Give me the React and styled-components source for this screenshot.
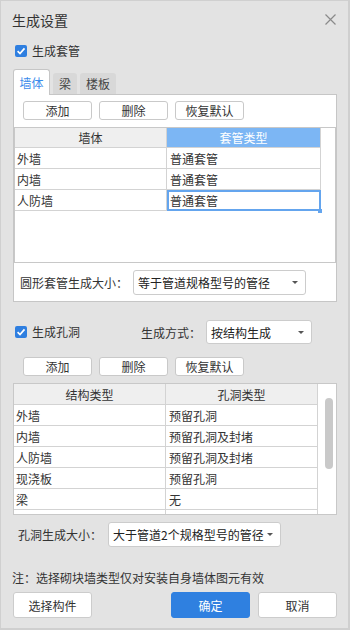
import React from "react";
import styled, { createGlobalStyle } from "styled-components";

const Global = createGlobalStyle`
  html, body { margin: 0; padding: 0; background: #ffffff; }
  * { box-sizing: border-box; }
`;

const Window = styled.div`
  width: 350px;
  height: 630px;
  background: #e3e3e3;
  border: 1px solid #d0d0d0;
  border-right: 2px solid #cfcfcf;
  border-bottom: 2px solid #cfcfcf;
  display: flex;
  flex-direction: column;
  font-family: "Noto Sans CJK SC", "Noto Sans", sans-serif;
  font-size: 12px;
  color: #333;
  overflow: hidden;
`;

const TitleBar = styled.div`
  height: 37px;
  flex: none;
  display: flex;
  align-items: center;
  justify-content: space-between;
  padding: 0 12px 0 11px;
`;

const Title = styled.div`
  font-size: 14px;
  line-height: 16px;
  color: #333;
`;

const Close = styled.button`
  border: none;
  background: transparent;
  padding: 0;
  width: 11px;
  height: 11px;
  display: flex;
`;

const CheckRow = styled.div`
  display: flex;
  align-items: center;
  height: ${(p) => p.$h || 14}px;
  margin-top: ${(p) => p.$mt || 0}px;
  padding-left: 14px;
  flex: none;
`;

const Box = styled.span`
  width: 12px;
  height: 12px;
  border-radius: 2px;
  background: #2f7fe0;
  display: inline-flex;
  align-items: center;
  justify-content: center;
  flex: none;
`;

const CheckLabel = styled.span`
  margin-left: 5px;
  line-height: 14px;
  font-size: 12px;
`;

const TabBar = styled.div`
  display: flex;
  align-items: flex-end;
  gap: 3px;
  margin-top: 11px;
  padding-left: 12px;
  margin-bottom: -1px;
  position: relative;
  z-index: 1;
  flex: none;
`;

const Tab = styled.div`
  width: ${(p) => p.$w}px;
  height: ${(p) => (p.$active ? 26 : 21)}px;
  margin-bottom: ${(p) => (p.$active ? 0 : 1)}px;
  background: ${(p) => (p.$active ? "#ffffff" : "#d8d8d8")};
  border: ${(p) => (p.$active ? "1px solid #c6c6c6" : "none")};
  border-bottom: none;
  border-radius: 3px 3px 0 0;
  color: ${(p) => (p.$active ? "#3b8beb" : "#444")};
  display: flex;
  align-items: center;
  justify-content: center;
  font-size: 12px;
  padding-bottom: ${(p) => (p.$active ? 1 : 0)}px;
`;

const Panel = styled.div`
  margin-left: 12px;
  width: 324px;
  height: 208px;
  border: 1px solid #c6c6c6;
  background: #ffffff;
  display: flex;
  flex-direction: column;
  flex: none;
`;

const ButtonRow = styled.div`
  display: flex;
  gap: 7px;
  padding-left: ${(p) => p.$pl}px;
  margin-top: ${(p) => p.$mt}px;
  flex: none;
`;

const SmallButton = styled.button`
  width: 69px;
  height: 19px;
  border: 1px solid #c9c9c9;
  border-radius: 3px;
  background: #ffffff;
  font-family: inherit;
  font-size: 12px;
  color: #333;
  padding: 0;
  line-height: 16px;
`;

const Frame = styled.div`
  margin-top: ${(p) => p.$mt}px;
  margin-left: ${(p) => p.$ml || 0}px;
  width: ${(p) => p.$w}px;
  height: ${(p) => p.$h}px;
  border: 1px solid #c8c8c8;
  background: #ffffff;
  display: flex;
  overflow: hidden;
  flex: none;
`;

const Grid = styled.div`
  display: flex;
  flex-direction: column;
  flex: none;
`;

const Row = styled.div`
  display: grid;
  grid-template-columns: ${(p) => p.$cols};
`;

const Cell = styled.div`
  position: relative;
  height: ${(p) => p.$h}px;
  border-right: 1px solid #d3d3d3;
  border-bottom: 1px solid #d3d3d3;
  background: ${(p) => (p.$blue ? "#7cb6f4" : p.$head ? "#efefef" : "#ffffff")};
  color: ${(p) => (p.$blue ? "#ffffff" : "#333")};
  display: flex;
  align-items: center;
  justify-content: ${(p) => (p.$head ? "center" : "flex-start")};
  padding-left: ${(p) => (p.$head ? 0 : p.$pl || 2)}px;
  font-size: 12px;
  white-space: nowrap;
  ${(p) =>
    p.$selected &&
    `
    outline: 2px solid #64a5ee;
    outline-offset: -2px;
    &::after {
      content: "";
      position: absolute;
      right: -2px;
      bottom: -3px;
      width: 4px;
      height: 4px;
      background: #64a5ee;
    }
  `}
`;

const Track = styled.div`
  flex: 1;
  padding: 14px 0 0 7px;
  background: #ffffff;
`;

const Thumb = styled.div`
  width: 8px;
  height: 71px;
  border-radius: 4px;
  background: #c9c9c9;
`;

const FieldRow = styled.div`
  display: flex;
  align-items: center;
  height: ${(p) => p.$h}px;
  margin-top: ${(p) => p.$mt || 0}px;
  padding-left: ${(p) => p.$pl}px;
  flex: none;
`;

const FieldLabel = styled.span`
  width: ${(p) => p.$w}px;
  flex: none;
  font-size: 12px;
  color: #333;
  white-space: nowrap;
`;

const Select = styled.div`
  width: ${(p) => p.$w}px;
  height: ${(p) => p.$h || 25}px;
  border: 1px solid #cccccc;
  border-radius: 3px;
  background: #ffffff;
  display: flex;
  align-items: center;
  justify-content: space-between;
  padding: 0 7px 0 4px;
  font-size: 12px;
  color: #222;
  flex: none;
  white-space: nowrap;
`;

const Arrow = styled.span`
  width: 0;
  height: 0;
  border-left: 3px solid transparent;
  border-right: 3px solid transparent;
  border-top: 3px solid #555;
  flex: none;
`;

const Spacer = styled.span`
  width: ${(p) => p.$w}px;
  flex: none;
`;

const Note = styled.div`
  margin-top: 23px;
  padding-left: 11px;
  height: 16px;
  line-height: 16px;
  font-size: 12px;
  color: #333;
  flex: none;
`;

const Footer = styled.div`
  display: flex;
  justify-content: space-between;
  margin-top: 6px;
  padding: 0 11px 0 12px;
  flex: none;
`;

const Group = styled.div`
  display: flex;
  gap: 8px;
`;

const Button = styled.button`
  width: 79px;
  height: 26px;
  border-radius: 3px;
  border: 1px solid ${(p) => (p.$primary ? "#2f80e0" : "#cccccc")};
  background: ${(p) => (p.$primary ? "#2f80e0" : "#ffffff")};
  color: ${(p) => (p.$primary ? "#ffffff" : "#333")};
  font-family: inherit;
  font-size: 12px;
  padding: 0;
`;

const Check = () => (
  <Box>
    <svg width="10" height="10" viewBox="0 0 10 10">
      <path d="M1.6 5.2 L4 7.5 L8.5 2.4" fill="none" stroke="#fff" strokeWidth="1.7" />
    </svg>
  </Box>
);

const sleeveRows = [
  ["外墙", "普通套管"],
  ["内墙", "普通套管"],
  ["人防墙", "普通套管"],
];

const holeRows = [
  ["外墙", "预留孔洞"],
  ["内墙", "预留孔洞及封堵"],
  ["人防墙", "预留孔洞及封堵"],
  ["现浇板", "预留孔洞"],
  ["梁", "无"],
  ["", ""],
];

export default function App() {
  return (
    <>
      <Global />
      <Window>
        <TitleBar>
          <Title>生成设置</Title>
          <Close aria-label="关闭">
            <svg width="11" height="11" viewBox="0 0 11 11">
              <path d="M0.5 0.5 L10.5 10.5 M10.5 0.5 L0.5 10.5" stroke="#8a8a8a" strokeWidth="1.2" />
            </svg>
          </Close>
        </TitleBar>

        <CheckRow $mt={6}>
          <Check />
          <CheckLabel>生成套管</CheckLabel>
        </CheckRow>

        <TabBar>
          <Tab $active $w={37}>墙体</Tab>
          <Tab $w={24}>梁</Tab>
          <Tab $w={36}>楼板</Tab>
        </TabBar>

        <Panel>
          <ButtonRow $pl={9} $mt={6}>
            <SmallButton>添加</SmallButton>
            <SmallButton>删除</SmallButton>
            <SmallButton>恢复默认</SmallButton>
          </ButtonRow>
          <Frame $mt={7} $w={322} $h={136}>
            <Grid>
              <Row $cols="152px 154px">
                <Cell $head $h={20}>墙体</Cell>
                <Cell $head $blue $h={20}>套管类型</Cell>
              </Row>
              {sleeveRows.map(([a, b], i) => (
                <Row key={a} $cols="152px 154px">
                  <Cell $h={21}>{a}</Cell>
                  <Cell $h={21} $pl={3} $selected={i === 2}>{b}</Cell>
                </Row>
              ))}
            </Grid>
          </Frame>
          <FieldRow $h={38} $pl={6}>
            <FieldLabel $w={113}>圆形套管生成大小：</FieldLabel>
            <Select $w={173}>
              <span>等于管道规格型号的管径</span>
              <Arrow />
            </Select>
          </FieldRow>
        </Panel>

        <CheckRow $mt={18} $h={24}>
          <Check />
          <CheckLabel>生成孔洞</CheckLabel>
          <Spacer $w={61} />
          <FieldLabel $w={65}>生成方式：</FieldLabel>
          <Select $w={106} $h={24}>
            <span>按结构生成</span>
            <Arrow />
          </Select>
        </CheckRow>

        <ButtonRow $pl={22} $mt={13}>
          <SmallButton>添加</SmallButton>
          <SmallButton>删除</SmallButton>
          <SmallButton>恢复默认</SmallButton>
        </ButtonRow>

        <Frame $mt={7} $ml={12} $w={324} $h={132}>
          <Grid>
            <Row $cols="152px 152px">
              <Cell $head $h={21}>结构类型</Cell>
              <Cell $head $h={21}>孔洞类型</Cell>
            </Row>
            {holeRows.map(([a, b], i) => (
              <Row key={i} $cols="152px 152px">
                <Cell $h={21}>{a}</Cell>
                <Cell $h={21} $pl={3}>{b}</Cell>
              </Row>
            ))}
          </Grid>
          <Track>
            <Thumb />
          </Track>
        </Frame>

        <FieldRow $h={25} $mt={7} $pl={17}>
          <FieldLabel $w={90}>孔洞生成大小：</FieldLabel>
          <Select $w={173}>
            <span>大于管道2个规格型号的管径</span>
            <Arrow />
          </Select>
        </FieldRow>

        <Note>注：选择砌块墙类型仅对安装自身墙体图元有效</Note>

        <Footer>
          <Button>选择构件</Button>
          <Group>
            <Button $primary>确定</Button>
            <Button>取消</Button>
          </Group>
        </Footer>
      </Window>
    </>
  );
}
